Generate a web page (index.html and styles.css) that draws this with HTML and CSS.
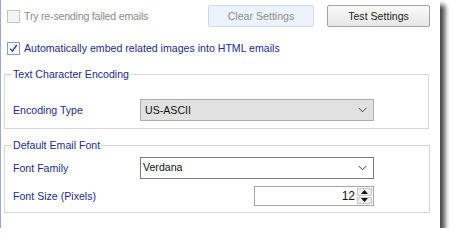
FILE: index.html
```html
<!DOCTYPE html>
<html>
<head>
<meta charset="utf-8">
<link rel="stylesheet" href="styles.css">
</head>
<body>
<div class="window">
  <div class="row-top">
    <label class="check disabled"><span class="box"></span><span>Try re-sending failed emails</span></label>
    <div class="buttons">
      <button class="btn btn-disabled">Clear Settings</button>
      <button class="btn">Test Settings</button>
    </div>
  </div>
  <label class="check row-embed"><span class="box checked"><svg width="11" height="11" viewBox="0 0 11 11"><path d="M2.2 5.6 L4.4 8.2 L8.8 2" fill="none" stroke="#2b4a8f" stroke-width="1.4"/></svg></span><span>Automatically embed related images into HTML emails</span></label>

  <fieldset class="group g1">
    <legend>Text Character Encoding</legend>
    <div class="field">
      <span class="lbl">Encoding Type</span>
      <div class="select select-gray"><span>US-ASCII</span><svg class="chev" width="9" height="6" viewBox="0 0 9 6"><path d="M0.5 0.8 L4.5 4.8 L8.5 0.8" fill="none" stroke="#444" stroke-width="1"/></svg></div>
    </div>
  </fieldset>

  <fieldset class="group g2">
    <legend>Default Email Font</legend>
    <div class="field">
      <span class="lbl">Font Family</span>
      <div class="select select-white"><span>Verdana</span><svg class="chev" width="9" height="6" viewBox="0 0 9 6"><path d="M0.5 0.8 L4.5 4.8 L8.5 0.8" fill="none" stroke="#444" stroke-width="1"/></svg></div>
    </div>
    <div class="field field-size">
      <span class="lbl">Font Size (Pixels)</span>
      <div class="spin">
        <span class="spin-val">12</span>
        <div class="spin-btns">
          <span class="sb"><svg width="7" height="4" viewBox="0 0 7 4"><path d="M0 4 L3.5 0 L7 4 Z" fill="#111"/></svg></span>
          <span class="sb"><svg width="7" height="4" viewBox="0 0 7 4"><path d="M0 0 L3.5 4 L7 0 Z" fill="#111"/></svg></span>
        </div>
      </div>
    </div>
  </fieldset>
</div>
</body>
</html>
```

FILE: styles.css
```css
* { box-sizing: border-box; }
html, body { margin: 0; padding: 0; background: #fff; }
body {
  font-family: "Liberation Sans", Arial, sans-serif;
  font-size: 10.6px;
  color: #1f2b80;
}
.window {
  width: 440px;
  height: 228px;
  background: #fff;
  border-left: 1px solid #9aaccc;
  box-shadow: 5px 5px 5px rgba(0,0,0,0.72);
  padding: 0 10px 0 3px;
  display: flex;
  flex-direction: column;
}
.row-top {
  margin-top: 5px;
  height: 22px;
  display: flex;
  align-items: center;
  justify-content: space-between;
  padding-left: 3px;
}
.check {
  display: flex;
  align-items: center;
  gap: 4px;
  line-height: 13px;
}
.check.disabled { color: #8c8c8c; margin-top: 1px; letter-spacing: -0.2px; }
.box {
  width: 13px;
  height: 13px;
  border: 1px solid #c4c4c4;
  background: #f4f4f4;
  display: flex;
  align-items: center;
  justify-content: center;
}
.box.checked {
  border-color: #8e9bb0;
  background: #f4f6fa;
}
.buttons { display: flex; gap: 13px; }
.btn {
  height: 22px;
  font-family: "Liberation Sans", Arial, sans-serif;
  font-size: 10.6px;
  color: #1e1e1e;
  border: 1px solid #a3a3a3;
  border-radius: 2px;
  background: linear-gradient(#fafafa, #e6e6e6);
  padding: 0;
  width: 103px;
}
.btn-disabled {
  width: 106px;
  color: #8d8d8d;
  background: #ebf3fc;
  border-color: #cbdcee;
}
.row-embed {
  margin-top: 15px;
  margin-left: 3px;
}
.group {
  margin: 0;
  border: 1px solid #d7d7d7;
  padding: 0 8px;
  width: 425px;
}
.group legend {
  padding: 0 1px;
  margin-left: -1px;
  line-height: 13px;
  color: #1f2b80;
}
.g1 { margin-top: 13px; padding-top: 18px; padding-bottom: 7px; }
.g2 { margin-top: 10px; padding-top: 5px; padding-bottom: 6px; width: 426px; }
.field {
  display: flex;
  align-items: center;
}
.field-size { margin-top: 7px; }
.lbl { width: 127px; }
.select {
  width: 234px;
  height: 22px;
  display: flex;
  align-items: center;
  justify-content: space-between;
  padding: 0 6px 0 4px;
  color: #111;
}
.select-gray { background: #e1e1e1; border: 1px solid #adadad; }
.select-white { background: #fff; border: 1px solid #7a7a7a; padding-left: 2px; }
.select-white span { margin-top: -3px; }
.spin {
  margin-left: 114px;
  width: 120px;
  height: 20px;
  border: 1px solid #a5a5a5;
  display: flex;
  align-items: center;
  justify-content: flex-end;
  padding: 1px;
  color: #111;
}
.spin-val { margin-right: 2px; font-size: 12px; }
.spin-btns {
  width: 15px;
  height: 100%;
  display: flex;
  flex-direction: column;
  gap: 1px;
}
.sb {
  flex: 1;
  background: #ececec;
  border: 1px solid #c9c9c9;
  display: flex;
  align-items: center;
  justify-content: center;
}
```
